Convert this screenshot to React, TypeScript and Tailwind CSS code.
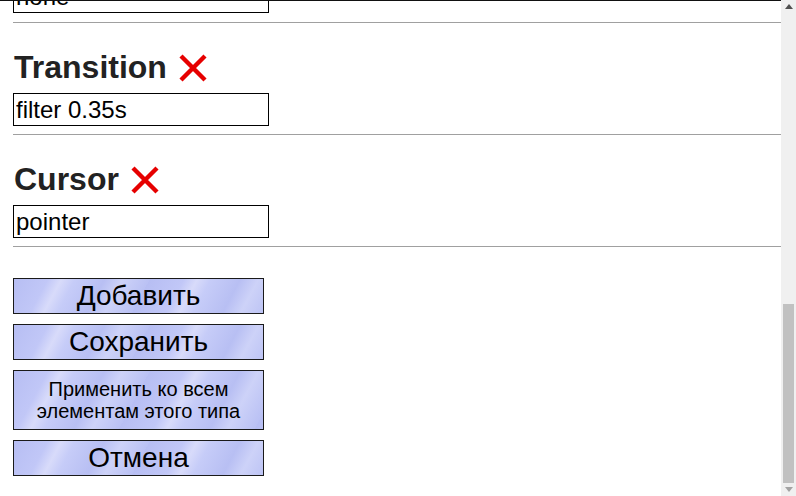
import React from 'react';

const font = { fontFamily: '"Liberation Sans", Arial, sans-serif' };

function RedX() {
    return (
        <svg width="28" height="28" viewBox="0 0 28 28" className="ml-[12px] shrink-0">
            <path d="M2 2 L26 26 M26 2 L2 26" stroke="#e60000" strokeWidth="4.4" strokeLinecap="butt" />
        </svg>
    );
}

function Field({ value }: { value: string }) {
    return (
        <input
            readOnly
            value={value}
            className="block w-[256px] h-[33px] border border-black bg-white px-[2px] py-px text-[24px] text-black outline-none"
        />
    );
}

function Section({ title, value }: { title: string; value: string }) {
    return (
        <div className="flex flex-col">
            <div className="mt-[26px] mb-[7px] flex items-center h-[37px]">
                <h2 className="pl-px text-[32px] leading-[37px] font-bold text-[#222]">{title}</h2>
                <RedX />
            </div>
            <Field value={value} />
            <div className="mt-[8px] h-px bg-[#a0a0a0]" />
        </div>
    );
}

const btn =
    'flex items-center justify-center w-[251px] border border-[#1a1a1a] text-black text-center bg-[#bfc6f7] bg-[repeating-linear-gradient(118deg,#b7bef3_0px,#c1c7f7_30px,#d8dbfa_42px,#c6ccf8_54px,#b8bff3_80px,#cdd2f8_96px,#bac1f4_120px)]';

export default function App() {
    return (
        <div className="flex w-[796px] h-[496px] bg-white overflow-hidden" style={font}>
            <main className="flex-1 overflow-hidden border-t border-[#111]">
                <div className="flex flex-col pl-[13px]">
                    <div className="-mt-[21px]">
                        <Field value="none" />
                    </div>
                    <div className="mt-[9px] h-px bg-[#a0a0a0]" />

                    <Section title="Transition" value="filter 0.35s" />
                    <Section title="Cursor" value="pointer" />

                    <div className="mt-[31px] flex flex-col gap-[10px]">
                        <button className={`${btn} h-[36px] text-[28px]`}>Добавить</button>
                        <button className={`${btn} h-[36px] text-[28px]`}>Сохранить</button>
                        <button className={`${btn} h-[60px] text-[20px] leading-[22px]`}>
                            Применить ко всем
                            <br />
                            элементам этого типа
                        </button>
                        <button className={`${btn} h-[36px] text-[28px]`}>Отмена</button>
                    </div>
                </div>
            </main>

            {/* scrollbar */}
            <div className="w-[15px] bg-[#f0f0f0] flex flex-col items-center">
                <div className="h-[17px] flex items-center justify-center">
                    <svg width="8" height="5" viewBox="0 0 8 5">
                        <path d="M0 5 L4 0 L8 5 Z" fill="#505050" />
                    </svg>
                </div>
                <div className="flex-1 w-full px-[2px] flex flex-col">
                    <div className="mt-[291px] h-[179px] w-full bg-[#c1c1c1]" />
                </div>
                <div className="h-[17px] flex items-center justify-center">
                    <svg width="8" height="5" viewBox="0 0 8 5">
                        <path d="M0 0 L8 0 L4 5 Z" fill="#a3a3a3" />
                    </svg>
                </div>
            </div>
        </div>
    );
}
